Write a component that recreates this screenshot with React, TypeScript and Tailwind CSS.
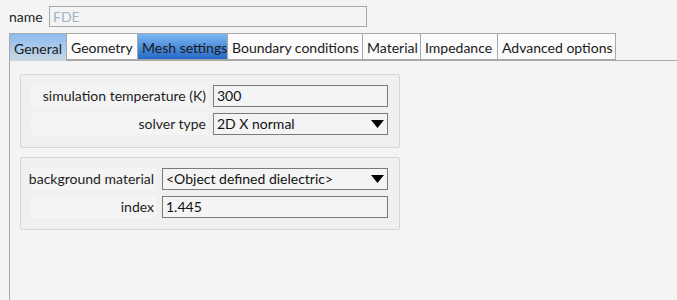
import React from 'react';

const tabs = [
  { label: 'General', w: 'w-[58px]', cls: 'bg-gradient-to-b from-[#8cbcef] to-[#c9d8e5] border-[#a8a8a8] border-b-0 h-[28px]' },
  { label: 'Geometry', w: 'w-[72px]', cls: 'bg-[#fbfbfb] border-[#a8a8a8]' },
  { label: 'Mesh settings', w: 'w-[91px]', cls: 'bg-gradient-to-b from-[#7cb8f2] to-[#2668c6] border-[#a8a8a8]' },
  { label: 'Boundary conditions', w: 'w-[136px]', cls: 'bg-[#fbfbfb] border-[#a8a8a8]' },
  { label: 'Material', w: 'w-[59px]', cls: 'bg-[#fbfbfb] border-[#a8a8a8]' },
  { label: 'Impedance', w: 'w-[78px]', cls: 'bg-[#fbfbfb] border-[#a8a8a8]' },
  { label: 'Advanced options', w: 'w-[119px]', cls: 'bg-[#fbfbfb] border-[#a8a8a8]' },
];

function Caret() {
  return (
    <svg width="13" height="8" viewBox="0 0 13 8" className="shrink-0">
      <polygon points="0,0 13,0 6.5,8" fill="#000" />
    </svg>
  );
}

function Row({ label, labelW, gap, children }: { label: string; labelW: string; gap: string; children: React.ReactNode }) {
  return (
    <div className={`flex ${gap} h-[22px]`}>
      <div className={`${labelW} h-full bg-[#f4f4f4] flex items-center justify-end pr-[2px] text-[#1e1e1e] whitespace-nowrap`}>{label}</div>
      {children}
    </div>
  );
}

function Field({ value, w, combo }: { value: string; w: string; combo?: boolean }) {
  return (
    <div className={`${w} h-[22px] border border-[#7a7a7a] bg-[#f4f4f4] flex items-center pl-[3px] pr-[3px] text-[#111] whitespace-nowrap`}>
      <span className="flex-1">{value}</span>
      {combo && <Caret />}
    </div>
  );
}

export default function App() {
  return (
    <div className="w-[677px] h-[300px] bg-[#f4f4f4] overflow-hidden text-[14px] leading-none" style={{ fontFamily: 'Lato, sans-serif' }}>
      <div className="flex items-center pt-[6px] pl-[9px] gap-[4px] h-[27px]">
        <span className="text-[#1e1e1e] w-[36px]">name</span>
        <div className="w-[318px] h-[21px] border border-[#a8a8a8] bg-[#f4f4f4] flex items-center pl-[3px] text-[#9fb4c6]">FDE</div>
      </div>
      <div className="flex pl-[9px] mt-[6px] h-[27px] items-start">
        {tabs.map((t, i) => (
          <div
            key={t.label}
            className={`${t.w} ${t.cls} h-[27px] border ${i > 0 ? '-ml-px' : ''} flex items-center pt-[2px] pl-[4px] text-[#1a1a1a] whitespace-nowrap`}
          >
            {t.label}
          </div>
        ))}
      </div>
      <div className="ml-[9px] border-l border-t border-[#a8a8a8] h-[240px] pl-[10px] pt-[13px] flex flex-col gap-[9px]">
        <div className="w-[380px] h-[74px] border border-[#d6d6d6] rounded-[2px] bg-[#f0f0f0] pl-[10px] pt-[10px] flex flex-col gap-[6px]">
          <Row label="simulation temperature (K)" labelW="w-[177px]" gap="gap-[5px]">
            <Field value="300" w="w-[175px]" />
          </Row>
          <Row label="solver type" labelW="w-[177px]" gap="gap-[5px]">
            <Field value="2D X normal" w="w-[175px]" combo />
          </Row>
        </div>
        <div className="w-[380px] h-[73px] border border-[#d6d6d6] rounded-[2px] bg-[#f0f0f0] pl-[10px] pt-[10px] flex flex-col gap-[6px]">
          <Row label="background material" labelW="w-[125px]" gap="gap-[6px]">
            <Field value="<Object defined dielectric>" w="w-[226px]" combo />
          </Row>
          <Row label="index" labelW="w-[125px]" gap="gap-[6px]">
            <Field value="1.445" w="w-[226px]" />
          </Row>
        </div>
      </div>
    </div>
  );
}
